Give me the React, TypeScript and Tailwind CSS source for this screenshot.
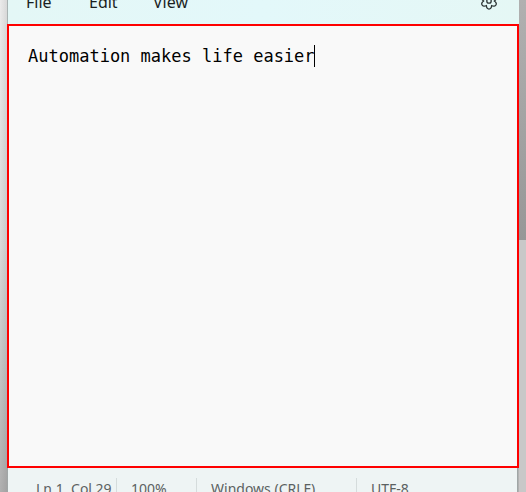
import { useState } from "react";

const menus = [
  { label: "File", width: "w-[63px]" },
  { label: "Edit", width: "w-16" },
  { label: "View", width: "w-16" },
];

function GearIcon() {
  return (
    <svg viewBox="0 0 18 18" className="size-[18px]" fill="none" stroke="#2b3333" strokeWidth="1.3" strokeLinejoin="round" aria-hidden="true">
      <path d="M11.6 13.5C11.8 18.2 6.2 18.2 6.4 13.5C2.5 16 -.4 11.2 3.8 9C-.4 6.8 2.5 2 6.4 4.5C6.2 -.2 11.8 -.2 11.6 4.5C15.5 2 18.4 6.8 14.2 9C18.4 11.2 15.5 16 11.6 13.5Z" />
      <circle cx="9" cy="9" r="2.2" />
    </svg>
  );
}

export default function App() {
  const [text, setText] = useState("Automation makes life easier");

  return (
    <div className="flex h-screen overflow-hidden bg-linear-to-b from-[#ebebeb] via-[#dadada] to-[#b0b0b0] font-['Noto_Sans',sans-serif]">
      <div className="w-[7px] shrink-0 bg-linear-to-r from-transparent to-black/8" />
      <main className="flex min-w-0 flex-1 flex-col">
        <header className="flex h-6 shrink-0 items-end justify-between border-l border-[#a9b3b3] bg-linear-to-r from-[#e4f7f6] via-[#e3f8fa] to-[#e5f7f5] pr-[21px] pb-2.5 pl-[18px]">
          <nav className="flex text-base leading-6 text-[#1b1f1f]">
            {menus.map((menu) => (
              <button key={menu.label} type="button" className={`${menu.width} text-left`}>
                {menu.label}
              </button>
            ))}
          </nav>
          <button type="button" aria-label="Settings" className="mb-1">
            <GearIcon />
          </button>
        </header>
        <section className="relative flex min-h-0 flex-1 border-2 border-[#ff0000] bg-[#f9f9f9] font-['DejaVu_Sans_Mono',monospace] text-[17px] leading-5 text-black">
          <textarea
            aria-label="Text editor"
            spellCheck={false}
            value={text}
            onChange={(event) => setText(event.target.value)}
            className="flex-1 resize-none bg-transparent px-[19px] py-5 caret-transparent outline-none"
          />
          <div aria-hidden="true" className="pointer-events-none absolute top-[19px] left-[19px] h-[22px] w-[28ch] border-r border-black" />
        </section>
        <footer className="mr-px flex h-6 shrink-0 items-start border-x border-[#a0a6a6] bg-[#eef4f4] pt-2.5 text-sm leading-[22px] text-[#5b6161]">
          <span className="w-[109px] border-r border-[#d5dcdc] pl-7">Ln 1, Col 29</span>
          <span className="w-20 border-r border-[#d5dcdc] pl-3.5">100%</span>
          <span className="w-40 border-r border-[#d5dcdc] pl-3.5">Windows (CRLF)</span>
          <span className="pl-3.5">UTF-8</span>
        </footer>
      </main>
      <div className="flex w-[7px] shrink-0 flex-col">
        <div className="h-60 bg-linear-to-b from-[#b0b0b0] to-[#979797]" />
        <div className="flex-1 bg-[#c8c8c8]" />
      </div>
    </div>
  );
}
